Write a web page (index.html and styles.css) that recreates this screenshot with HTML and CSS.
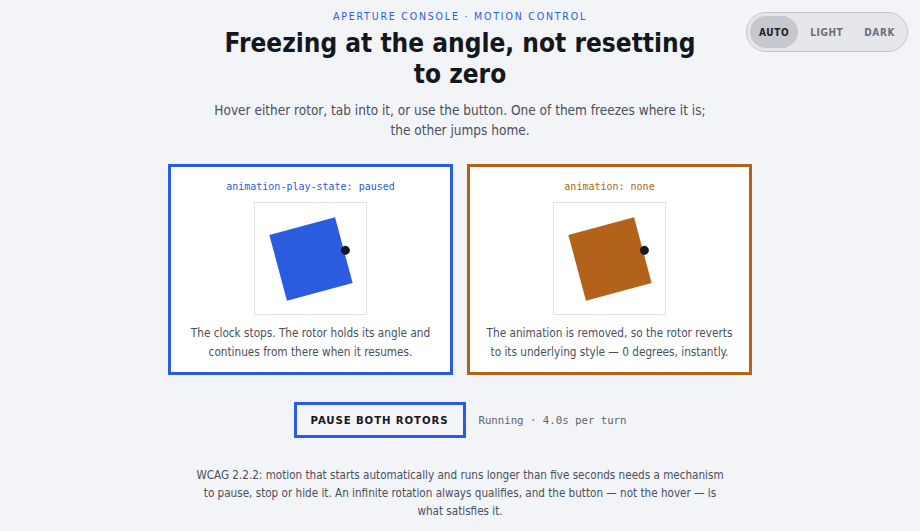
FILE: index.html
```html
<!DOCTYPE html>
<html lang="en">
<head>
<meta charset="utf-8">
<title>Aperture Console · Motion Control</title>
<link rel="stylesheet" href="styles.css">
</head>
<body>
<div class="page">
  <div class="theme" role="group" aria-label="Theme">
    <button class="theme-opt is-active">AUTO</button>
    <button class="theme-opt">LIGHT</button>
    <button class="theme-opt">DARK</button>
  </div>
  <header class="head">
    <p class="eyebrow">APERTURE CONSOLE · MOTION CONTROL</p>
    <h1 class="title">Freezing at the angle, not resetting to zero</h1>
    <p class="lede">Hover either rotor, tab into it, or use the button. One of them freezes where it is; the other jumps home.</p>
  </header>
  <section class="cards">
    <div class="card card-blue" tabindex="0">
      <code class="label">animation-play-state: paused</code>
      <div class="stage"><div class="rotor"><span class="pin"></span></div></div>
      <p class="desc">The clock stops. The rotor holds its angle and continues from there when it resumes.</p>
    </div>
    <div class="card card-orange" tabindex="0">
      <code class="label">animation: none</code>
      <div class="stage"><div class="rotor"><span class="pin"></span></div></div>
      <p class="desc">The animation is removed, so the rotor reverts to its underlying style — 0 degrees, instantly.</p>
    </div>
  </section>
  <div class="controls">
    <button class="pause">PAUSE BOTH ROTORS</button>
    <span class="status">Running · 4.0s per turn</span>
  </div>
  <p class="note">WCAG 2.2.2: motion that starts automatically and runs longer than five seconds needs a mechanism to pause, stop or hide it. An infinite rotation always qualifies, and the button — not the hover — is what satisfies it.</p>
</div>
</body>
</html>
```

FILE: styles.css
```css
* { box-sizing: border-box; }
html, body { margin: 0; padding: 0; }
body {
  background: #f3f4f8;
  color: #15171c;
  font-family: "DejaVu Sans Condensed", "DejaVu Sans", sans-serif;
  font-stretch: condensed;
}
.page {
  position: relative;
  width: 920px;
  height: 531px;
  display: flex;
  flex-direction: column;
  align-items: center;
  padding-top: 9px;
}
.theme {
  position: absolute;
  top: 12px;
  left: 746px;
  display: flex;
  gap: 3px;
  padding: 3px;
  border: 1px solid #c3c5cc;
  border-radius: 20px;
  background: #e6e7eb;
}
.theme-opt {
  font-family: inherit;
  font-stretch: condensed;
  font-size: 10px;
  font-weight: bold;
  letter-spacing: 0.6px;
  color: #6b6f7a;
  background: transparent;
  border: 0;
  border-radius: 16px;
  height: 32px;
  padding: 0 9px;
}
.theme-opt.is-active {
  background: #c7c8cd;
  color: #1e2026;
}
.head { text-align: center; }
.eyebrow {
  margin: 0;
  font-size: 10.5px;
  letter-spacing: 1.8px;
  color: #2b5ce0;
  line-height: 14px;
}
.title {
  margin: 5px auto 0;
  width: 500px;
  font-size: 26px;
  line-height: 31px;
  font-weight: bold;
}
.lede {
  margin: 10px auto 0;
  width: 512px;
  font-size: 13.5px;
  line-height: 20px;
  color: #4a4f5c;
}
.cards {
  display: flex;
  gap: 14px;
  margin-top: 24px;
}
.card {
  width: 285px;
  height: 211px;
  background: #ffffff;
  border: 3px solid;
  display: flex;
  flex-direction: column;
  align-items: center;
  padding-top: 13px;
}
.card-blue { border-color: #2b5ce0; }
.card-orange { border-color: #b3621a; }
.label {
  font-family: "DejaVu Sans Mono", monospace;
  font-size: 10px;
  line-height: 14px;
}
.card-blue .label { color: #2b5ce0; }
.card-orange .label { color: #b3621a; }
.stage {
  margin-top: 8px;
  width: 113px;
  height: 113px;
  border: 1px solid #dfe1e6;
  background: #fff;
  display: flex;
  align-items: center;
  justify-content: center;
}
.rotor {
  position: relative;
  width: 68px;
  height: 68px;
  transform: rotate(-15deg);
}
.card-blue .rotor { background: #2b5ce0; }
.card-orange .rotor { background: #b3621a; }
.pin {
  position: absolute;
  right: -6px;
  top: 50%;
  width: 9px;
  height: 9px;
  margin-top: -4.5px;
  border-radius: 50%;
  background: #15171c;
}
.desc {
  margin: 9px 0 0;
  width: 250px;
  text-align: center;
  font-size: 11.7px;
  line-height: 19px;
  color: #4a4f5c;
}
.controls {
  display: flex;
  align-items: center;
  gap: 13px;
  margin-top: 27px;
}
.pause {
  width: 172px;
  height: 36px;
  border: 3px solid #2b5ce0;
  background: #f3f4f8;
  font-family: inherit;
  font-stretch: condensed;
  font-weight: bold;
  font-size: 11.3px;
  letter-spacing: 0.9px;
  color: #15171c;
}
.status {
  font-family: "DejaVu Sans Mono", monospace;
  font-size: 10.7px;
  color: #5f6470;
}
.note {
  margin: 28px 0 0;
  width: 532px;
  text-align: center;
  font-size: 11.6px;
  line-height: 18px;
  color: #4a4f5c;
}
```
